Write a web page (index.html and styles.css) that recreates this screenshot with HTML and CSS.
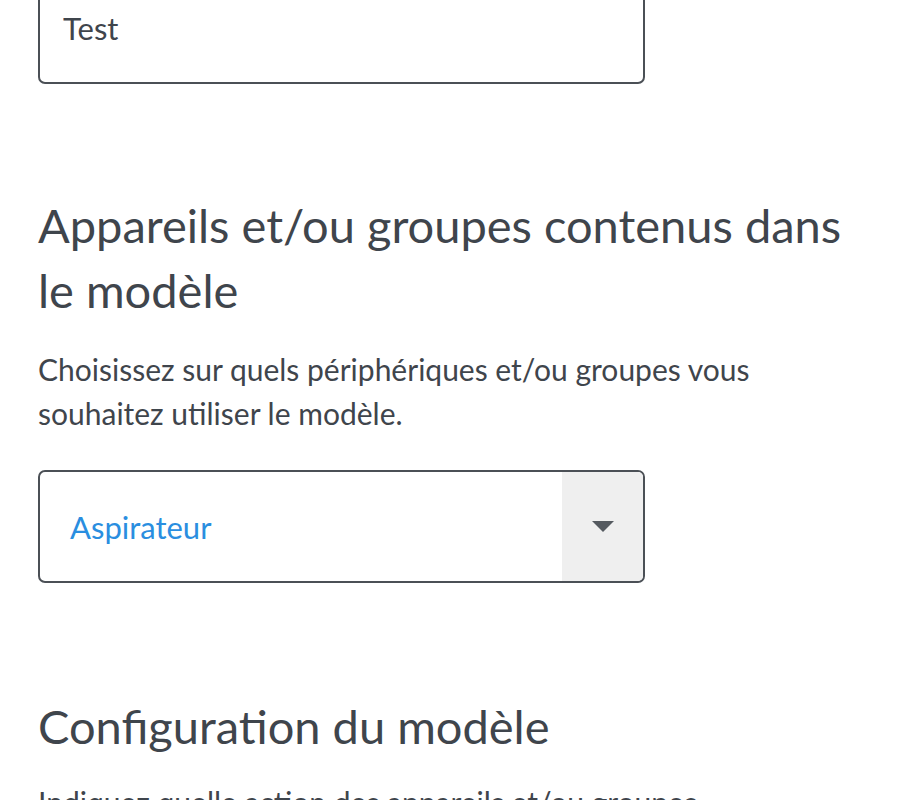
FILE: index.html
```html
<!DOCTYPE html>
<html lang="fr">
<head>
<meta charset="utf-8">
<title>Modèle</title>
<link rel="stylesheet" href="styles.css">
</head>
<body>
<main class="page">
  <div class="field">
    <input class="text-input" type="text" value="Test" readonly>
  </div>

  <section class="section">
    <h2 class="section-title">Appareils et/ou groupes contenus dans le modèle</h2>
    <p class="section-desc">Choisissez sur quels périphériques et/ou groupes vous souhaitez utiliser le modèle.</p>
    <div class="select">
      <span class="select-value">Aspirateur</span>
      <span class="select-arrow"><span class="caret"></span></span>
    </div>
  </section>

  <section class="section section-config">
    <h2 class="section-title">Configuration du modèle</h2>
    <p class="section-desc">Indiquez quelle action des appareils et/ou groupes sélectionnés doit être utilisée.</p>
  </section>
</main>
</body>
</html>
```
FILE: styles.css
```css
* { box-sizing: border-box; }
html, body { margin: 0; padding: 0; background: #ffffff; }
body {
  font-family: "Lato", "Noto Sans", sans-serif;
  color: #3f454c;
  overflow: hidden;
}
.page {
  padding: 0 38px;
  margin-top: -29px;
}
.field { width: 607px; }
.text-input {
  display: block;
  width: 607px;
  height: 113px;
  border: 2px solid #4b5056;
  border-radius: 7px;
  padding: 0 23px;
  font-family: "Lato", "Noto Sans", sans-serif;
  font-size: 31px;
  color: #3f454c;
  background: #fff;
  outline: none;
}
.section { margin-top: 109px; }
.section-config { margin-top: 111px; }
.section-title {
  margin: 0;
  font-size: 47px;
  font-weight: 400;
  line-height: 65px;
  color: #3f454c;
}
.section-desc {
  margin: 24px 0 0;
  font-size: 30px;
  line-height: 44px;
  color: #3f454c;
  max-width: 800px;
}
.section-config .section-desc { margin-top: 21px; }
.select {
  margin-top: 35px;
  width: 607px;
  height: 113px;
  border: 2px solid #4b5056;
  border-radius: 7px;
  display: flex;
  align-items: stretch;
  overflow: hidden;
}
.select-value {
  flex: 1;
  display: flex;
  align-items: center;
  padding-left: 30px;
  font-size: 31px;
  color: #2a8ee0;
}
.select-arrow {
  width: 81px;
  background: #efefef;
  display: flex;
  align-items: center;
  justify-content: center;
}
.caret {
  width: 0;
  height: 0;
  border-left: 11.5px solid transparent;
  border-right: 11.5px solid transparent;
  border-top: 11px solid #555a60;
}
```
